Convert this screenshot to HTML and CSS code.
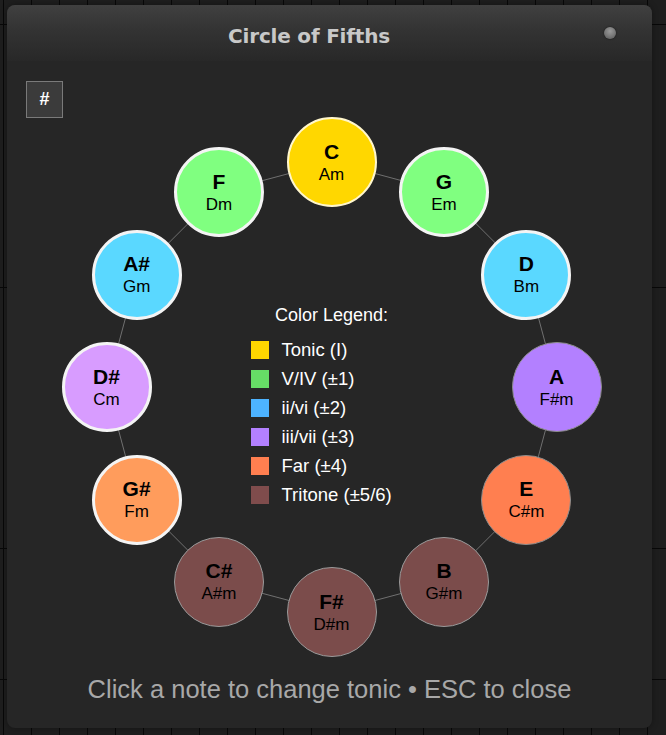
FILE: index.html
```html
<!DOCTYPE html>
<html>
<head>
<meta charset="utf-8">
<link rel="stylesheet" href="styles.css">
</head>
<body>
<div class="window">
  <div class="titlebar">
    <span class="title">Circle of Fifths</span>
    <span class="close-dot"></span>
  </div>
  <div class="content">
    <button class="sharp-toggle">#</button>
    <div class="wheel">
      <svg class="ring" width="560" height="560" viewBox="0 0 560 560">
        <polygon points="280,55 392.5,85.14 474.86,167.5 505,280 474.86,392.5 392.5,474.86 280,505 167.5,474.86 85.14,392.5 55,280 85.14,167.5 167.5,85.14" fill="none" stroke="#707070" stroke-width="1"/>
      </svg>
      <div class="node tonic" style="left:235px;top:10px"><b>C</b><span>Am</span></div>
      <div class="node near hl" style="left:347.5px;top:40.14px"><b>G</b><span>Em</span></div>
      <div class="node second hl" style="left:429.86px;top:122.5px"><b>D</b><span>Bm</span></div>
      <div class="node third" style="left:460px;top:235px"><b>A</b><span>F#m</span></div>
      <div class="node far" style="left:429.86px;top:347.5px"><b>E</b><span>C#m</span></div>
      <div class="node tritone" style="left:347.5px;top:429.86px"><b>B</b><span>G#m</span></div>
      <div class="node tritone" style="left:235px;top:460px"><b>F#</b><span>D#m</span></div>
      <div class="node tritone" style="left:122.5px;top:429.86px"><b>C#</b><span>A#m</span></div>
      <div class="node far-hl hl" style="left:40.14px;top:347.5px"><b>G#</b><span>Fm</span></div>
      <div class="node third-hl hl" style="left:10px;top:235px"><b>D#</b><span>Cm</span></div>
      <div class="node second hl" style="left:40.14px;top:122.5px"><b>A#</b><span>Gm</span></div>
      <div class="node near hl" style="left:122.5px;top:40.14px"><b>F</b><span>Dm</span></div>

      <div class="legend">
        <div class="legend-title">Color Legend:</div>
        <ul class="legend-list">
          <li><i class="sw sw-tonic"></i>Tonic (I)</li>
          <li><i class="sw sw-near"></i>V/IV (±1)</li>
          <li><i class="sw sw-second"></i>ii/vi (±2)</li>
          <li><i class="sw sw-third"></i>iii/vii (±3)</li>
          <li><i class="sw sw-far"></i>Far (±4)</li>
          <li><i class="sw sw-tritone"></i>Tritone (±5/6)</li>
        </ul>
      </div>
    </div>
    <p class="hint">Click a note to change tonic • ESC to close</p>
  </div>
</div>
</body>
</html>
```

FILE: styles.css
```css
html, body {
  margin: 0;
  padding: 0;
}
body {
  width: 666px;
  height: 735px;
  overflow: hidden;
  background-color: #1e1e1e;
  background-image:
    linear-gradient(to bottom, transparent 24px, #080808 24px 25px, transparent 25px 287px, #080808 287px 288px, transparent 288px 548px, #080808 548px 549px, transparent 549px 679px, #080808 679px 680px, transparent 680px),
    linear-gradient(to right, #080808 1px, transparent 1px);
  background-size: 100% 100%, 28px 100%;
  background-position: 0 0, 3px 0;
  font-family: "Liberation Sans", Arial, sans-serif;
  display: flex;
  align-items: flex-start;
}
.window {
  margin: 5px 0 0 7px;
  width: 645px;
  height: 723px;
  border-radius: 8px;
  background: #262626;
  overflow: hidden;
  display: flex;
  flex-direction: column;
  box-shadow: 0 0 6px rgba(0,0,0,0.35);
}
.titlebar {
  height: 56px;
  flex: none;
  display: flex;
  align-items: center;
  position: relative;
  background: linear-gradient(to bottom, #404040 0%, #333333 45%, #282828 100%);
}
.title {
  flex: 1;
  text-align: center;
  padding-right: 41px;
  padding-top: 6px;
  font-family: "DejaVu Sans", sans-serif;
  font-weight: bold;
  font-size: 20px;
  color: #c8c8c8;
  letter-spacing: -0.2px;
}
.close-dot {
  position: absolute;
  right: 36px;
  top: 22px;
  width: 12px;
  height: 12px;
  border-radius: 50%;
  background: radial-gradient(circle at 50% 35%, #9a9a9a 0%, #7a7a7a 50%, #555 100%);
  box-shadow: 0 0 2px rgba(0,0,0,0.6);
}
.content {
  position: relative;
  flex: 1;
  display: flex;
  flex-direction: column;
  align-items: center;
}
.sharp-toggle {
  position: absolute;
  left: 19px;
  top: 20px;
  width: 37px;
  height: 37px;
  box-sizing: border-box;
  border: 1px solid #7a7a7a;
  background: #3b3b3b;
  color: #ffffff;
  font-family: "Liberation Sans", Arial, sans-serif;
  font-weight: bold;
  font-size: 18px;
  padding: 0;
  margin: 0;
  line-height: 35px;
  text-align: center;
}
.wheel {
  position: relative;
  width: 560px;
  height: 560px;
  margin-top: 46px;
  margin-left: 4px;
  flex: none;
  display: flex;
  flex-direction: column;
  align-items: center;
}
.ring {
  position: absolute;
  left: 0;
  top: 0;
}
.node {
  position: absolute;
  width: 90px;
  height: 90px;
  box-sizing: border-box;
  border-radius: 50%;
  border: 1px solid #8c8c8c;
  display: flex;
  flex-direction: column;
  align-items: center;
  justify-content: center;
  color: #000;
}
.node b {
  font-size: 21px;
  font-weight: bold;
  line-height: 23px;
}
.node span {
  font-size: 17px;
  line-height: 20px;
  margin-top: 2px;
}
.node.hl {
  border: 3px solid #f4f4f4;
}
.node.tonic {
  background: #ffd700;
  border: 2px solid #fff6cc;
}
.node.near { background: #80ff80; }
.node.second { background: #5ad8ff; }
.node.third { background: #b380ff; }
.node.third-hl { background: #d89cff; }
.node.far { background: #ff7f50; }
.node.far-hl { background: #ff9c5c; }
.node.tritone { background: #7b4c4b; border-color: #9a9a9a; }

.legend {
  margin-top: 197px;
  display: flex;
  flex-direction: column;
  align-items: center;
  color: #ffffff;
}
.legend-title {
  line-height: 22px;
  font-size: 18px;
}
.legend-list {
  list-style: none;
  margin: 9px 0 0 0;
  padding: 0;
  width: 162px;
}
.legend-list li {
  height: 29px;
  display: flex;
  align-items: center;
  gap: 13px;
  font-size: 18.5px;
}
.sw {
  width: 18px;
  height: 18px;
  flex: none;
}
.sw-tonic { background: #ffd700; }
.sw-near { background: #66dd66; }
.sw-second { background: #4db3ff; }
.sw-third { background: #b380ff; }
.sw-far { background: #ff7f50; }
.sw-tritone { background: #7f4c4c; }

.hint {
  margin: 9px 0 0 0;
  font-size: 25.5px;
  line-height: 26px;
  color: #a8a8a8;
  text-align: center;
}
```
